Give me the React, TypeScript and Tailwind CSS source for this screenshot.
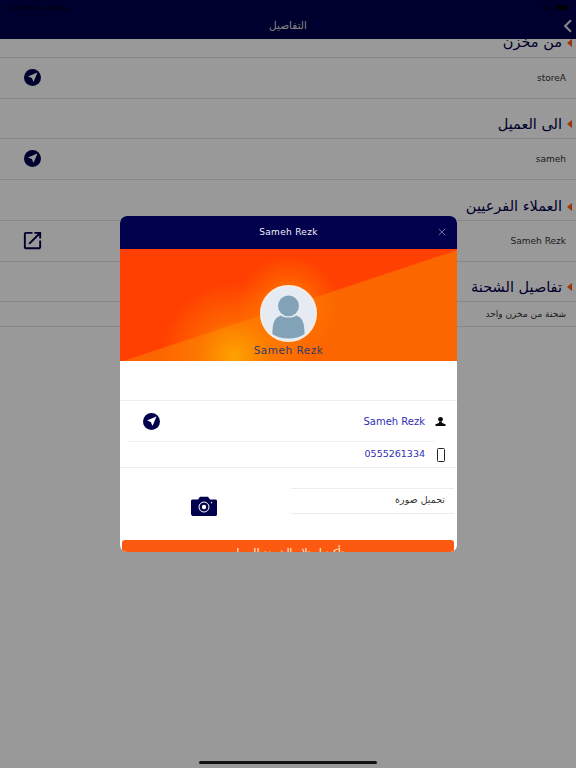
import { MdNearMe, MdOpenInNew, MdChevronLeft } from "react-icons/md";
import { X } from "lucide-react";

const font = "font-['DejaVu_Sans','Noto_Sans',sans-serif]";

function NavCircle({ size }: { size: string }) {
  return (
    <span className={`flex items-center justify-center rounded-full bg-[#00004d] text-white ${size}`}>
      <MdNearMe className="h-[12px] w-[12px]" />
    </span>
  );
}

function SectionTitle({ title, className }: { title: string; className: string }) {
  return (
    <div className={`flex items-center gap-[5px] border-b border-[#e2e2e2] pr-[4px] ${className}`}>
      <span className="h-0 w-0 border-y-[4px] border-r-[5px] border-y-transparent border-r-[#ff5a10]" />
      <span className="text-[14.5px] leading-none text-[#00004d]">{title}</span>
    </div>
  );
}

function DetailRow({ text, height, icon }: { text: string; height: string; icon?: React.ReactNode }) {
  return (
    <div className={`flex items-center justify-between border-b border-[#e2e2e2] pr-[10px] pb-[2px] pl-[24px] ${height}`}>
      <span className="mt-[4px] text-[9px] text-[#333]">{text}</span>
      {icon}
    </div>
  );
}

function Modal() {
  return (
    <div className="absolute top-[216px] left-[120px] z-30 flex h-[336px] w-[337px] flex-col overflow-hidden rounded-[7px] bg-white">
      <div className="relative flex h-[33px] shrink-0 items-center justify-center bg-[#00004d] text-[9px] tracking-[0.3px] text-[#f0f0f5]">
        Sameh Rezk
        <X strokeWidth={1} className="absolute top-[10px] right-[9px] h-[12px] w-[12px] text-[#d8d8e4]" />
      </div>
      <div className="flex h-[112px] shrink-0 flex-col items-center bg-[radial-gradient(circle_at_34%_96%,rgba(255,165,0,0.95),rgba(255,140,0,0.45)_15%,transparent_30%),radial-gradient(circle_at_50%_52%,rgba(255,150,0,0.95),rgba(255,120,0,0.45)_17%,transparent_29%),linear-gradient(to_bottom_right,#ff4000_50.3%,#fc6600_50.8%)] pt-[36px]">
        <div className="flex h-[57px] w-[57px] items-center justify-center overflow-hidden rounded-full border-[2px] border-[#f4ece6] bg-[#e6ebf3]">
          <svg viewBox="0 0 56 56" className="h-full w-full">
            <circle cx="28" cy="20" r="11" fill="#82a2b8" />
            <path d="M11 50c0-12 2-18 9-20 3 3 13 3 16 0 7 2 9 8 9 20-9 6-25 6-34 0z" fill="#82a2b8" />
          </svg>
        </div>
        <span className="mt-[1px] text-[10.5px] leading-[14px] tracking-[0.5px] text-[#2f3a6a]">Sameh Rezk</span>
      </div>
      <div className="h-[40px] shrink-0 border-b border-[#ececec]" />
      <div className="flex h-[40px] shrink-0 items-center justify-between pr-[11px] pl-[23px]">
        <NavCircle size="h-[17px] w-[17px]" />
        <div className="flex items-center gap-[10px]">
          <span className="text-[10px] text-[#2f2fb5]">Sameh Rezk</span>
          <svg viewBox="0 0 12 12" className="h-[11px] w-[11px]" fill="#0a0a0a">
            <circle cx="6" cy="3.6" r="2.6" />
            <path d="M4.6 6h2.8l.4 1.6L11.5 9v2H.5V9l3.7-1.4z" />
          </svg>
        </div>
      </div>
      <div className="mr-[22px] ml-[8px] h-px shrink-0 bg-[#f0f0f0]" />
      <div className="flex h-[26px] shrink-0 items-center justify-end gap-[12px] border-b border-[#ececec] pr-[12px]">
        <span className="text-[9.5px] text-[#2f2fb5]">0555261334</span>
        <span className="h-[14px] w-[8px] rounded-[1.5px] border-[1.5px] border-[#222]" />
      </div>
      <div className="flex h-[72px] shrink-0 items-center justify-between pt-[1px] pr-[3px] pl-[71px]">
        <svg viewBox="0 0 26 20" className="mt-[2px] h-[20px] w-[26px]">
          <path
            d="M1.5 3.5h5.5L9 .8h8l2 2.7h5.5c.8 0 1.5.7 1.5 1.5v13.5c0 .8-.7 1.5-1.5 1.5h-23C.7 19.5 0 18.8 0 18V5c0-.8.7-1.5 1.5-1.5z"
            fill="#00004d"
          />
          <circle cx="13" cy="11" r="5" fill="none" stroke="#fff" strokeWidth="1" />
          <circle cx="13" cy="11" r="2.2" fill="#fff" />
          <circle cx="20.5" cy="6.8" r="0.7" fill="#fff" />
        </svg>
        <div className="mt-[-8px] flex h-[26px] w-[163px] items-center justify-end border-y border-[#ececec] pr-[9px] text-[9.5px] text-[#333]">
          تحميل صورة
        </div>
      </div>
      <div className="mr-[3px] ml-[2px] flex h-[24px] shrink-0 justify-center rounded-[3px] bg-[#fc5a10] pt-[5px] text-[10px] text-white">
        تأكيد استلام الشحنة للعميل
      </div>
    </div>
  );
}

export default function App() {
  return (
    <div className={`relative h-[768px] w-[576px] overflow-hidden bg-white ${font}`}>
      <div className="relative z-10 flex h-[39px] flex-col bg-[#00004d] text-white">
        <div className="flex h-[15px] items-center justify-between px-[9px] text-[6px] text-black">
          <span>3:43 PM  Thu 13 Mar</span>
          <span className="flex items-center gap-[2px]">
            69%
            <span className="h-[5px] w-[10px] rounded-[1px] bg-black" />
          </span>
        </div>
        <div className="relative flex flex-1 items-center justify-center pb-[2px] text-[10.5px] text-[#ddd]">
          التفاصيل
          <MdChevronLeft className="absolute top-[-2px] right-[-5px] h-[26px] w-[26px]" />
        </div>
      </div>
      <main dir="rtl">
        <SectionTitle title="من مخزن" className="h-[19px] pb-[11px]" />
        <DetailRow text="storeA" height="h-[41px]" icon={<NavCircle size="h-[17px] w-[17px]" />} />
        <SectionTitle title="الى العميل" className="h-[40px] pt-[11px]" />
        <DetailRow text="sameh" height="h-[41px]" icon={<NavCircle size="h-[17px] w-[17px]" />} />
        <SectionTitle title="العملاء الفرعيين" className="h-[41px] pt-[13px]" />
        <DetailRow
          text="Sameh Rezk"
          height="h-[41px]"
          icon={<MdOpenInNew className="ml-[-3px] h-[23px] w-[23px] text-[#00004d]" />}
        />
        <SectionTitle title="تفاصيل الشحنة" className="h-[40px] pt-[11px]" />
        <DetailRow text="شحنة من مخزن واحد" height="h-[25px]" />
      </main>
      <div className="absolute inset-0 z-20 bg-black/40" />
      <Modal />
      <div className="absolute bottom-[4px] left-[199px] z-30 h-[3px] w-[178px] rounded-full bg-[#111]" />
    </div>
  );
}
